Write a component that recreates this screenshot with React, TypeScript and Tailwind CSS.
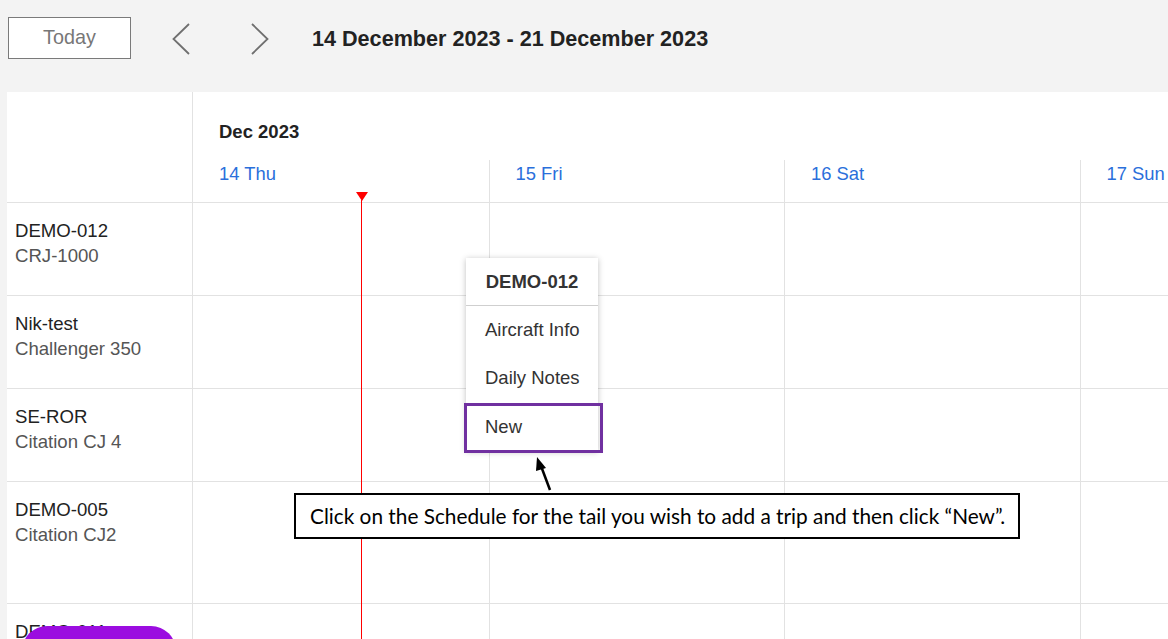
import * as React from "react";

const DAYS = ["14 Thu", "15 Fri", "16 Sat", "17 Sun"];

const TAILS = [
  { tail: "DEMO-012", type: "CRJ-1000", h: "h-[93px]" },
  { tail: "Nik-test", type: "Challenger 350", h: "h-[93px]" },
  { tail: "SE-ROR", type: "Citation CJ 4", h: "h-[93px]" },
  { tail: "DEMO-005", type: "Citation CJ2", h: "h-[122px]" },
  { tail: "DEMO-011", type: "Phenom 300", h: "h-[93px]" },
];

function Chevron({ dir }: { dir: "left" | "right" }) {
  return (
    <svg width="18" height="32" viewBox="0 0 18 32" fill="none" stroke="#6f6f6f" strokeWidth="1.8">
      {dir === "left" ? <path d="M17 1 L1.5 16 L17 31" /> : <path d="M1 1 L16.5 16 L1 31" />}
    </svg>
  );
}

function Toolbar() {
  return (
    <div className="flex items-center h-[78px] pl-[8px]">
      <button className="w-[123px] h-[42px] border border-[#7a7a7a] bg-white text-[19.8px] text-[#777] mt-[-2px]">
        Today
      </button>
      <div className="ml-[41px] mt-[-1px]">
        <Chevron dir="left" />
      </div>
      <div className="ml-[61px] mt-[-1px]">
        <Chevron dir="right" />
      </div>
      <div className="ml-[43px] text-[21.6px] font-bold text-[#222]">
        14 December 2023 - 21 December 2023
      </div>
    </div>
  );
}

function ContextMenu() {
  return (
    <div className="absolute left-[466px] top-[258px] w-[132px] bg-white shadow-[0_1px_6px_rgba(0,0,0,0.25)] text-[18.5px] text-[#333]">
      <div className="h-[48px] flex items-center justify-center font-bold border-b border-[#cfcfcf]">DEMO-012</div>
      <div className="h-[48px] flex items-center pl-[19px]">Aircraft Info</div>
      <div className="h-[48px] flex items-center pl-[19px]">Daily Notes</div>
      <div className="h-[49px] flex items-center pl-[19px]">New</div>
    </div>
  );
}

export default function App() {
  return (
    <div className="relative w-[1168px] h-[639px] overflow-hidden bg-[#f3f3f3] font-['Liberation_Sans',Arial,sans-serif]">
      <Toolbar />

      <div className="ml-[7px] mt-[14px] bg-white">
        {/* header */}
        <div className="flex h-[111px] border-b border-[#e2e2e2]">
          <div className="w-[186px] shrink-0 border-r border-[#e2e2e2]" />
          <div className="flex flex-col flex-1">
            <div className="h-[68px] pl-[26px] pt-[26px] text-[18.5px] font-bold text-[#222]">Dec 2023</div>
            <div className="flex flex-1">
              {DAYS.map((d, i) => (
                <div
                  key={d}
                  className={`w-[295.5px] shrink-0 pl-[26px] text-[18.4px] text-[#2a6fdb] ${i > 0 ? "border-l border-[#e2e2e2]" : ""}`}
                >
                  {d}
                </div>
              ))}
            </div>
          </div>
        </div>

        {/* rows */}
        {TAILS.map((t) => (
          <div key={t.tail} className={`flex ${t.h} border-b border-[#e2e2e2]`}>
            <div className="w-[186px] shrink-0 border-r border-[#e2e2e2] pl-[8px] pt-[15px] text-[18.6px] leading-[25px]">
              <div className="text-[#222]">{t.tail}</div>
              <div className="text-[#555]">{t.type}</div>
            </div>
            {DAYS.map((d, i) => (
              <div key={d} className={`w-[295.5px] shrink-0 ${i > 0 ? "border-l border-[#e2e2e2]" : ""}`} />
            ))}
          </div>
        ))}
      </div>

      {/* current time marker */}
      <div className="absolute left-[356px] top-[192px] w-0 h-0 border-l-[6px] border-r-[6px] border-t-[9px] border-l-transparent border-r-transparent border-t-[#ff0000]" />
      <div className="absolute left-[361px] top-[200px] h-[440px] border-l border-l-[#ff0000]" />

      <ContextMenu />
      <div className="absolute left-[464px] top-[403px] w-[139px] h-[50px] border-[3px] border-[#7030a0]" />

      {/* annotation arrow */}
      <svg className="absolute left-[530px] top-[452px]" width="30" height="42" viewBox="0 0 30 42">
        <line x1="20" y1="38" x2="11" y2="14" stroke="#000" strokeWidth="2.5" />
        <polygon points="7,5 6,19 16,16" fill="#000" />
      </svg>

      <div className="absolute left-[294px] top-[493px] w-[726px] h-[46px] border-2 border-black bg-white flex items-center pl-[14px] text-[20.8px] text-black font-['Lato','Open_Sans',sans-serif]">
        Click on the Schedule for the tail you wish to add a trip and then click “New”.
      </div>

      {/* floating pill */}
      <div className="absolute left-[22px] top-[626px] w-[154px] h-[50px] rounded-full bg-[#9b0de0]" />
    </div>
  );
}
